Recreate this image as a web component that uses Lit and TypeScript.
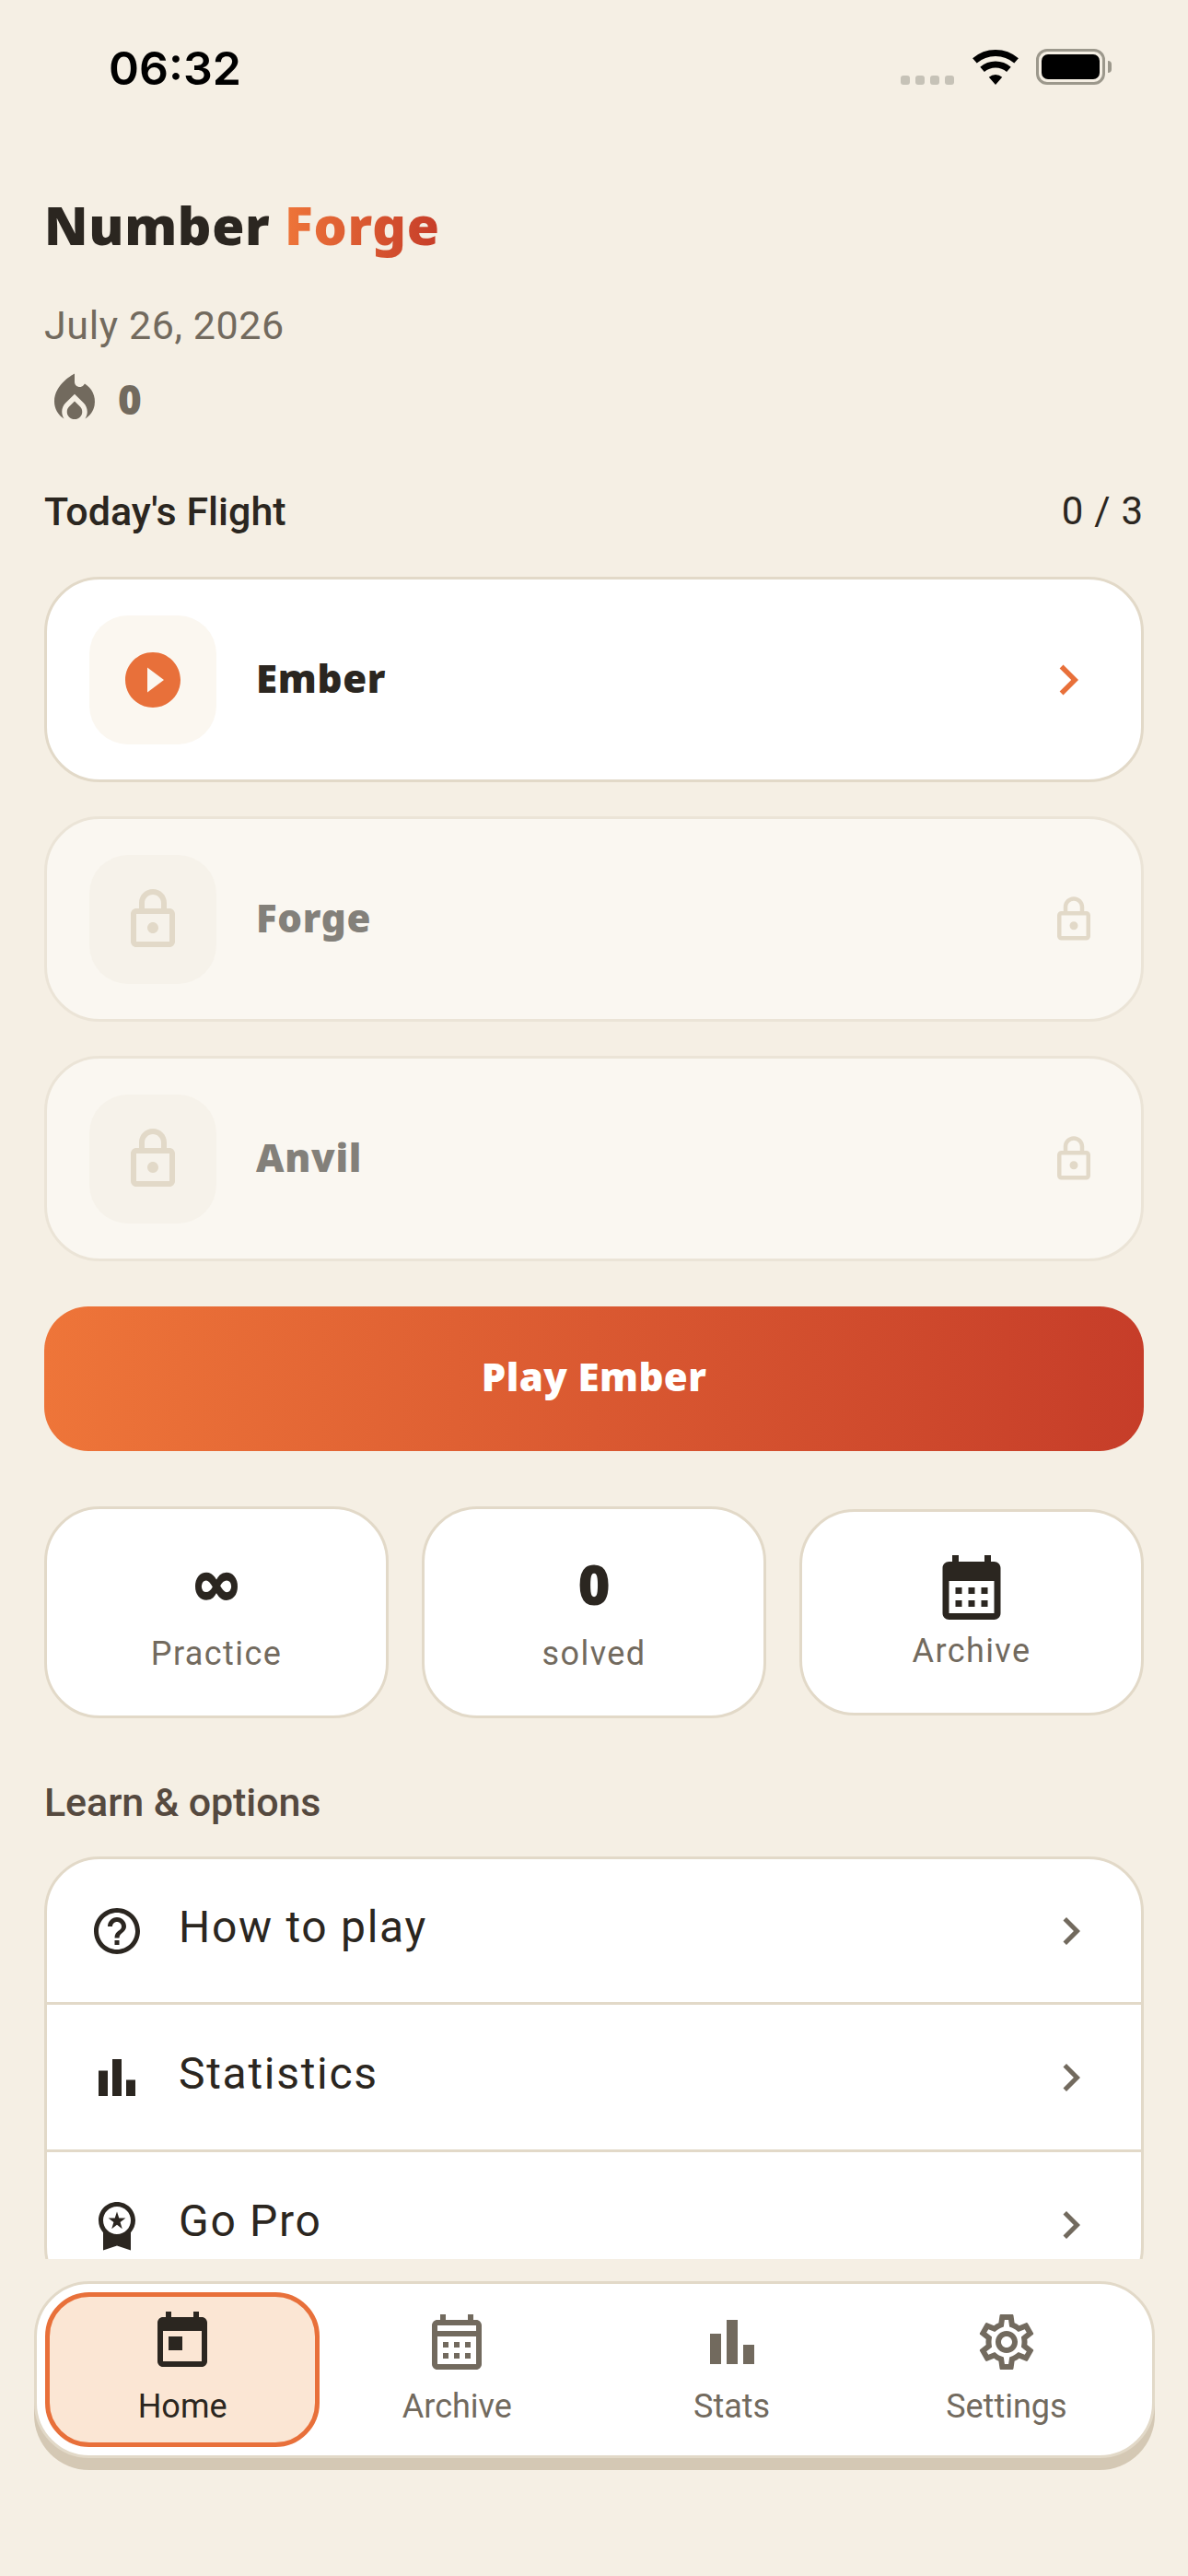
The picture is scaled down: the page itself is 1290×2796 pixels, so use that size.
import { LitElement, html, css, svg } from "lit";
import { customElement } from "lit/decorators.js";

// material icon paths
const HELP = "M11 18h2v-2h-2v2zm1-16C6.48 2 2 6.48 2 12s4.48 10 10 10 10-4.48 10-10S17.52 2 12 2zm0 18c-4.41 0-8-3.59-8-8s3.59-8 8-8 8 3.59 8 8-3.59 8-8 8zm0-14c-2.21 0-4 1.79-4 4h2c0-1.1.9-2 2-2s2 .9 2 2c0 2-3 1.75-3 5h2c0-2.25 3-2.5 3-5 0-2.21-1.79-4-4-4z";
const BARS = "M4 9h4v11H4zm12 4h4v7h-4zm-6-9h4v16h-4z";
const MEDAL = "M9.68 13.69L12 11.93l2.31 1.76-.88-2.85L15.75 9h-2.84L12 6.19 11.09 9H8.25l2.31 1.84-.88 2.85zM20 10c0-4.42-3.58-8-8-8s-8 3.58-8 8c0 2.03.76 3.87 2 5.28V23l6-2 6 2v-7.72c1.24-1.41 2-3.25 2-5.28zm-8-6c3.31 0 6 2.69 6 6s-2.69 6-6 6-6-2.69-6-6 2.69-6 6-6z";
const CHEVRON = "M10 6L8.59 7.41 13.17 12l-4.58 4.59L10 18l6-6z";
const FLAME = "M12 12.9l-2.13 2.09C9.31 15.55 9 16.28 9 17.06 9 18.68 10.35 20 12 20s3-1.32 3-2.94c0-.78-.31-1.52-.87-2.07L12 12.9zM16 6l-.44.55C14.38 8.02 12 7.19 12 5.3V2S4 6 4 13c0 2.92 1.56 5.47 3.89 6.86-.56-.79-.89-1.76-.89-2.8 0-1.32.52-2.56 1.47-3.5L12 10.1l3.53 3.47c.95.93 1.47 2.17 1.47 3.5 0 1.02-.31 1.96-.85 2.75 1.89-1.15 3.29-3.06 3.71-5.3.66-3.55-1.07-6.9-3.86-8.52z";
const PLAY = "M12 2C6.48 2 2 6.48 2 12s4.48 10 10 10 10-4.48 10-10S17.52 2 12 2zM10 16.5v-9l6 4.5-6 4.5z";
const LOCK = "M18 8h-1V6c0-2.76-2.24-5-5-5S7 3.24 7 6v2H6c-1.1 0-2 .9-2 2v10c0 1.1.9 2 2 2h12c1.1 0 2-.9 2-2V10c0-1.1-.9-2-2-2zM9 6c0-1.66 1.34-3 3-3s3 1.34 3 3v2H9V6zm9 14H6V10h12v10zm-6-3c1.1 0 2-.9 2-2s-.9-2-2-2-2 .9-2 2 .9 2 2 2z";
const TODAY = "M19 3h-1V1h-2v2H8V1H6v2H5c-1.11 0-1.99.9-1.99 2L3 19c0 1.1.89 2 2 2h14c1.1 0 2-.9 2-2V5c0-1.1-.9-2-2-2zm0 16H5V8h14v11zM7 10h5v5H7z";
const CAL_OUTLINE = "M19 4h-1V2h-2v2H8V2H6v2H5c-1.1 0-2 .9-2 2v14c0 1.1.9 2 2 2h14c1.1 0 2-.9 2-2V6c0-1.1-.9-2-2-2zm0 16H5V10h14v10zm0-12H5V6h14v2zM9 14H7v-2h2v2zm4 0h-2v-2h2v2zm4 0h-2v-2h2v2zm-8 4H7v-2h2v2zm4 0h-2v-2h2v2zm4 0h-2v-2h2v2z";
const CAL_FILLED = "M19 4h-1V2h-2v2H8V2H6v2H5c-1.1 0-2 .9-2 2v14c0 1.1.9 2 2 2h14c1.1 0 2-.9 2-2V6c0-1.1-.9-2-2-2zm0 16H5V10h14v10zM9 14H7v-2h2v2zm4 0h-2v-2h2v2zm4 0h-2v-2h2v2zm-8 4H7v-2h2v2zm4 0h-2v-2h2v2zm4 0h-2v-2h2v2z";
const GEAR = "M19.43 12.98c.04-.32.07-.64.07-.98 0-.34-.03-.66-.07-.98l2.11-1.65c.19-.15.24-.42.12-.64l-2-3.46c-.09-.16-.26-.25-.44-.25-.06 0-.12.01-.17.03l-2.49 1c-.52-.4-1.08-.73-1.69-.98l-.38-2.65C14.46 2.18 14.25 2 14 2h-4c-.25 0-.46.18-.49.42l-.38 2.65c-.61.25-1.17.59-1.69.98l-2.49-1c-.06-.02-.12-.03-.18-.03-.17 0-.34.09-.43.25l-2 3.46c-.13.22-.07.49.12.64l2.11 1.65c-.04.32-.07.65-.07.98 0 .33.03.66.07.98l-2.11 1.65c-.19.15-.24.42-.12.64l2 3.46c.09.16.26.25.44.25.06 0 .12-.01.17-.03l2.49-1c.52.4 1.08.73 1.69.98l.38 2.65c.03.24.24.42.49.42h4c.25 0 .46-.18.49-.42l.38-2.65c.61-.25 1.17-.59 1.69-.98l2.49 1c.06.02.12.03.18.03.17 0 .34-.09.43-.25l2-3.46c.12-.22.07-.49-.12-.64l-2.11-1.65zm-1.98-1.71c.04.31.05.52.05.73 0 .21-.02.43-.05.73l-.14 1.13.89.7 1.08.84-.7 1.21-1.27-.51-1.04-.42-.9.68c-.43.32-.84.56-1.25.73l-1.06.43-.16 1.13-.2 1.35h-1.4l-.19-1.35-.16-1.13-1.06-.43c-.43-.18-.83-.41-1.23-.71l-.91-.7-1.06.43-1.27.51-.7-1.21 1.08-.84.89-.7-.14-1.13c-.03-.31-.05-.54-.05-.74s.02-.43.05-.73l.14-1.13-.89-.7-1.08-.84.7-1.21 1.27.51 1.04.42.9-.68c.43-.32.84-.56 1.25-.73l1.06-.43.16-1.13.2-1.35h1.39l.19 1.35.16 1.13 1.06.43c.43.18.83.41 1.23.71l.91.7 1.06-.43 1.27-.51.7 1.21-1.07.85-.89.7.14 1.13zM12 8c-2.21 0-4 1.79-4 4s1.79 4 4 4 4-1.79 4-4-1.79-4-4-4zm0 6c-1.1 0-2-.9-2-2s.9-2 2-2 2 .9 2 2-.9 2-2 2z";

const icon = (d: string, cls: string) => html`<svg class="icon ${cls}" viewBox="0 0 24 24">${svg`<path d=${d} fill-rule="evenodd"></path>`}</svg>`;

@customElement("app-root")
export class AppRoot extends LitElement {
  static styles = css`
    :host {
      display: block;
      width: 1290px;
      height: 2796px;
      overflow: hidden;
      background: #f5efe4;
      color: #2b2620;
      font-family: Roboto, sans-serif;
    }
    .icon { display: block; flex: none; fill: currentColor; }
    .display { font-family: "Noto Sans", sans-serif; font-weight: 900; }

    .status {
      height: 120px;
      box-sizing: border-box;
      padding: 44px 90px 0 118px;
      display: flex;
      justify-content: space-between;
      align-items: flex-start;
    }
    .time { font: 600 50px/60px Inter, sans-serif; color: #000; }
    .status-right { display: flex; align-items: flex-end; height: 48px; }
    .dots { display: flex; gap: 6px; margin: 0 20px 0 0; }
    .dots i { width: 10px; height: 10px; border-radius: 3px; background: #c6c2b7; }
    .wifi { display: block; width: 50px; height: 38px; margin-right: 19px; }
    .battery {
      width: 75px; height: 39px; box-sizing: border-box;
      border: 3px solid #9c988c; border-radius: 12px; padding: 3px; background: #f5efe4;
      position: relative;
    }
    .battery b { display: block; height: 100%; background: #000; border-radius: 7px; }
    .battery::after {
      content: ""; position: absolute; right: -10px; top: 10px;
      width: 4px; height: 13px; background: #9c988c; border-radius: 0 4px 4px 0;
    }

    .scroll { height: 2332px; overflow: hidden; box-sizing: border-box; padding: 88px 48px 0; }
    h1 { margin: 0; font-size: 57px; line-height: 72px; letter-spacing: 0.7px; }
    .grad {
      background: linear-gradient(90deg, #ee7539, #c63d29);
      -webkit-background-clip: text; background-clip: text; color: transparent;
    }
    .date { margin-top: 45px; font-size: 43px; line-height: 56px; color: #726a5e; letter-spacing: 0.6px; }
    .streak { margin-top: 19px; display: flex; align-items: center; gap: 14px; color: #726a5e; }
    .streak span { font-size: 44px; line-height: 66px; }
    .s66 { width: 66px; height: 66px; }

    .flight {
      margin-top: 61px; display: flex; justify-content: space-between;
      font-size: 43px; line-height: 56px; font-weight: 500;
    }
    .flight span:last-child { font-weight: 400; font-size: 42px; letter-spacing: 0.8px; }

    .levels { margin-top: 43px; display: flex; flex-direction: column; gap: 37px; }
    .level {
      height: 223px; box-sizing: border-box; display: flex; align-items: center;
      padding: 0 46px; background: #fff; border: 3px solid #e2d9c8; border-radius: 60px;
    }
    .level .tile {
      width: 138px; height: 140px; border-radius: 42px; background: #fbf7f0;
      display: flex; align-items: center; justify-content: center; margin-right: 43px;
    }
    .level .name { flex: 1; font-size: 42px; line-height: 56px; margin-top: -4px; letter-spacing: 0.7px; }
    .s72 { width: 72px; height: 72px; }
    .s54 { width: 54px; height: 54px; }
    .orange { color: #e8703a; }
    .level.locked { background: #faf7f1; border-color: #ebe4d7; }
    .level.locked .tile { background: #f6f2ea; color: #e2d9c8; }
    .level.locked .name { color: #83807a; }
    .level.locked .end { color: #e2d9c8; }

    .play {
      margin-top: 49px; height: 157px; border-radius: 48px; box-sizing: border-box;
      background: linear-gradient(90deg, #ee7539, #c63d29);
      color: #fff; font-size: 42px; padding-bottom: 6px; letter-spacing: 0.4px;
      display: flex; align-items: center; justify-content: center;
    }

    .stats {
      margin-top: 60px; display: grid; grid-template-columns: repeat(3, 1fr);
      column-gap: 36px; align-items: center;
    }
    .stat {
      box-sizing: border-box; height: 230px; background: #fff; border: 3px solid #e2d9c8;
      border-radius: 60px; display: flex; flex-direction: column; align-items: center;
      padding-top: 45px; color: #2b2620;
    }
    .stat .big { font-size: 60px; line-height: 72px; }
    .stat .inf { font-family: "DejaVu Sans", sans-serif; font-weight: 700; font-size: 68px; -webkit-text-stroke: 2px currentColor; }
    .stat .label { font-size: 36px; line-height: 48px; letter-spacing: 1.4px; color: #726a5e; margin-top: 16px; }
    .stat.arch { height: 224px; padding-top: 40px; }
    .stat.arch .label { margin-top: 3px; }
    .s84 { width: 84px; height: 84px; }

    .learn { margin-top: 63px; font-size: 43px; line-height: 56px; font-weight: 500; color: #55493f; letter-spacing: -0.1px; }
    .list { margin-top: 31px; background: #fff; border: 3px solid #e2d9c8; border-radius: 60px; }
    .row {
      height: 160px; box-sizing: border-box; display: flex; align-items: center;
      padding: 0 46px; border-bottom: 3px solid #e2d9c8;
    }
    .row:first-child { height: 158px; }
    .row .label { flex: 1; margin-left: 37px; font-size: 48px; line-height: 60px; letter-spacing: 1.7px; margin-bottom: 8px; }
    .row .chev { color: #726a5e; }
    .s60 { width: 60px; height: 60px; }

    nav {
      margin: 24px 36px 0 37px; height: 192px; box-sizing: border-box; padding: 9px;
      background: #fff; border: 3px solid #e2d9c8; border-radius: 60px;
      box-shadow: 0 13px 0 #d4c8b4;
      display: grid; grid-template-columns: repeat(4, 1fr);
    }
    .tab {
      box-sizing: border-box; display: flex; flex-direction: column; align-items: center;
      padding-top: 18px; border: 5px solid transparent; border-radius: 48px; color: #726a5e;
      font-size: 36px; line-height: 48px;
    }
    .tab span { margin-top: 10px; }
    .tab.on { background: #fbe6d4; border-color: #e8703a; color: #2b2620; }
    .tab .icon { margin-top: -5px; }
  `;

  private level(name: string, active: boolean) {
    return html`<div class="level ${active ? "" : "locked"}">
      <div class="tile ${active ? "orange" : ""}">${icon(active ? PLAY : LOCK, "s72")}</div>
      <div class="name display">${name}</div>
      ${active
        ? html`<div class="orange">${icon(CHEVRON, "s66")}</div>`
        : html`<div class="end">${icon(LOCK, "s54")}</div>`}
    </div>`;
  }

  private row(d: string, label: string) {
    return html`<div class="row">
      ${icon(d, "s60")}
      <div class="label">${label}</div>
      <div class="chev">${icon(CHEVRON, "s60")}</div>
    </div>`;
  }

  private tab(d: string, label: string, on = false) {
    return html`<div class="tab ${on ? "on" : ""}">${icon(d, "s72")}<span>${label}</span></div>`;
  }

  render() {
    return html`
      <div class="status">
        <div class="time">06:32</div>
        <div class="status-right">
          <div class="dots"><i></i><i></i><i></i><i></i></div>
          <svg class="wifi" viewBox="0 0 50 38">
            <path d="M2.4 11.95A34.5 34.5 0 0 1 47.6 11.95" fill="none" stroke="#000" stroke-width="7"></path>
            <path d="M10.6 21.4A22 22 0 0 1 39.4 21.4" fill="none" stroke="#000" stroke-width="7"></path>
            <path d="M25 38L17.8 29.7A11 11 0 0 1 32.2 29.7Z"></path>
          </svg>
          <div class="battery"><b></b></div>
        </div>
      </div>
      <div class="scroll">
        <h1 class="display">Number <span class="grad">Forge</span></h1>
        <div class="date">July 26, 2026</div>
        <div class="streak">${icon(FLAME, "s66")}<span class="display">0</span></div>
        <div class="flight"><span>Today's Flight</span><span>0 / 3</span></div>
        <div class="levels">
          ${this.level("Ember", true)}
          ${this.level("Forge", false)}
          ${this.level("Anvil", false)}
        </div>
        <div class="play display">Play Ember</div>
        <div class="stats">
          <div class="stat"><div class="big inf">∞</div><div class="label">Practice</div></div>
          <div class="stat"><div class="big display">0</div><div class="label">solved</div></div>
          <div class="stat arch">${icon(CAL_FILLED, "s84")}<div class="label">Archive</div></div>
        </div>
        <div class="learn">Learn &amp; options</div>
        <div class="list">
          ${this.row(HELP, "How to play")}
          ${this.row(BARS, "Statistics")}
          ${this.row(MEDAL, "Go Pro")}
        </div>
      </div>
      <nav>
        ${this.tab(TODAY, "Home", true)}
        ${this.tab(CAL_OUTLINE, "Archive")}
        ${this.tab(BARS, "Stats")}
        ${this.tab(GEAR, "Settings")}
      </nav>
    `;
  }
}
